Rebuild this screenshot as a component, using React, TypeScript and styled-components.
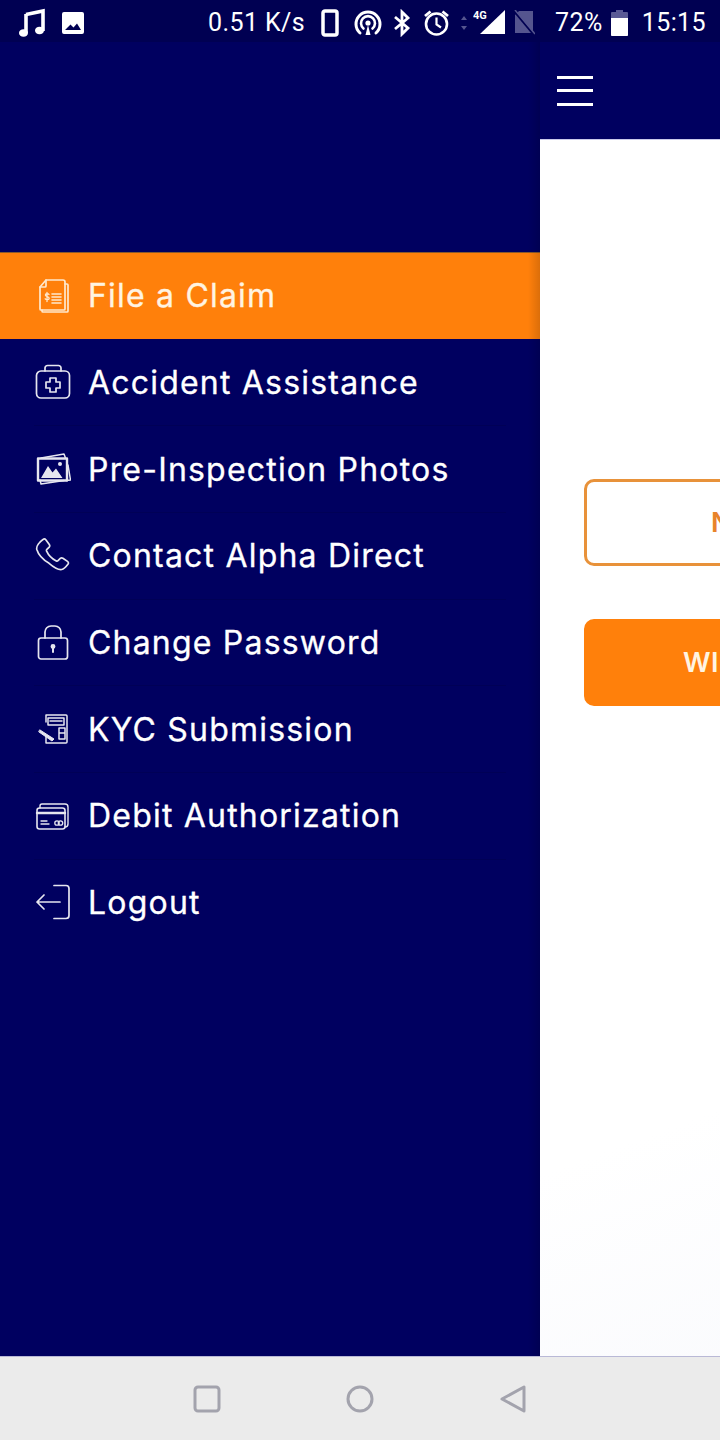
import styled, { createGlobalStyle } from 'styled-components';
import { ReactNode } from 'react';

const GlobalStyle = createGlobalStyle`
	html, body {
		margin: 0;
		padding: 0;
		background: #fff;
	}
	* {
		box-sizing: border-box;
	}
`;

const Screen = styled.div`
	width: 720px;
	height: 1440px;
	display: flex;
	flex-direction: column;
	overflow: hidden;
	font-family: 'Inter', 'Liberation Sans', sans-serif;
`;

const StatusBar = styled.div`
	height: 42px;
	flex-shrink: 0;
	display: flex;
	align-items: center;
	padding-top: 3px;
	background: #000052;
	color: #fff;
`;

const StatusLeft = styled.div`
	display: flex;
	align-items: center;
	gap: 16px;
	padding-left: 17px;
`;

const StatusRight = styled.div`
	margin-left: auto;
	display: flex;
	align-items: center;
	padding-right: 14px;
`;

const StatusText = styled.span<{ $left?: number }>`
	font-family: 'Roboto', 'Liberation Sans', sans-serif;
	font-size: 25px;
	line-height: 38px;
	letter-spacing: 0.4px;
	white-space: nowrap;
	margin-left: ${(p) => p.$left ?? 0}px;
`;

const StatusIcon = styled.svg<{ $left?: number }>`
	display: block;
	flex-shrink: 0;
	margin-left: ${(p) => p.$left ?? 0}px;
`;

const Main = styled.div`
	flex: 1;
	min-height: 0;
	display: flex;
	overflow: hidden;
`;

const Drawer = styled.nav`
	position: relative;
	width: 540px;
	flex-shrink: 0;
	background: #000060;
	padding-top: 210px;

	&::after {
		content: '';
		position: absolute;
		top: 0;
		bottom: 0;
		right: 0;
		width: 12px;
		background: linear-gradient(to right, rgba(0, 0, 0, 0), rgba(0, 0, 0, 0.14));
	}
`;

const MenuRow = styled.div<{ $active?: boolean }>`
	height: 86.67px;
	display: flex;
	align-items: center;
	gap: 17px;
	padding-left: 35px;
	background: ${(p) => (p.$active ? '#ff800b' : 'transparent')};
	color: ${(p) => (p.$active ? '#fff4e2' : '#fff')};
	border-top: 1px solid ${(p) => (p.$active ? '#8a5a2c' : 'transparent')};
	position: relative;

	& + &::before {
		content: '';
		position: absolute;
		top: -1px;
		left: 34px;
		right: 34px;
		height: 1px;
		background: #000056;
	}
`;

const MenuLabel = styled.span`
	font-size: 32px;
	font-weight: 400;
	letter-spacing: 1.2px;
	white-space: nowrap;
	-webkit-text-stroke: 0.3px currentColor;
`;

const MenuIcon = styled.svg`
	width: 36px;
	height: 36px;
	flex-shrink: 0;
	display: block;
	fill: none;
	stroke: currentColor;
	stroke-width: 1.7;
	stroke-linejoin: round;
	stroke-linecap: round;
	opacity: 0.9;
`;

const Content = styled.div`
	width: 720px;
	flex-shrink: 0;
	display: flex;
	flex-direction: column;
	background: #fff;
`;

const Header = styled.div`
	height: 98px;
	flex-shrink: 0;
	display: flex;
	align-items: center;
	padding-left: 17px;
	background: #000060;
	border-bottom: 1px solid #c9c9ea;
`;

const Hamburger = styled.div`
	width: 36px;
	display: flex;
	flex-direction: column;
	gap: 10.5px;

	span {
		display: block;
		height: 3px;
		background: #fff;
	}
`;

const Body = styled.div`
	flex: 1;
	display: flex;
	flex-direction: column;
	gap: 53px;
	padding: 339px 44px 0;
	background: linear-gradient(160deg, #ffffff 70%, #f7f8fc 100%);
`;

const ActionButton = styled.div<{ $filled?: boolean; $textLeft: number }>`
	height: 87px;
	display: flex;
	align-items: center;
	border-radius: 10px;
	padding-left: ${(p) => p.$textLeft}px;
	font-size: 27px;
	font-weight: 600;
	letter-spacing: 0.5px;
	background: ${(p) => (p.$filled ? '#ff800b' : '#fff')};
	border: 3px solid ${(p) => (p.$filled ? '#ff800b' : '#e8923a')};
	color: ${(p) => (p.$filled ? '#fff4e2' : '#e8842a')};
`;

const NavBar = styled.div`
	height: 84px;
	flex-shrink: 0;
	display: flex;
	justify-content: center;
	align-items: center;
	gap: 125px;
	background: #ebebeb;
	border-top: 1px solid #b9b9d6;
`;

const NavIcon = styled.svg`
	width: 28px;
	height: 28px;
	display: block;
	fill: none;
	stroke: #a3a3ad;
	stroke-width: 3;
	stroke-linejoin: round;
`;

type MenuItem = { label: string; active?: boolean; icon: ReactNode };

const items: MenuItem[] = [
	{
		label: 'File a Claim',
		active: true,
		icon: (
			<>
				<path d="M11 2h17a2 2 0 0 1 2 2v27a1 1 0 0 1-1 1H6a1 1 0 0 1-1-1V9z" />
				<path d="M11 2v6a1 1 0 0 1-1 1H5" />
				<path d="M30 6h2a1 1 0 0 1 1 1v26a1 1 0 0 1-1 1H8a1 1 0 0 1-1-1v-1" />
				<path d="M14 16.5c-.6-1-3.6-1.2-3.6.6 0 1.9 3.8 1.100 3.800 3.200 0 1.800-3.200 1.600-4 .5M12 14.500v9" strokeWidth="1.3" />
				<path d="M17 16h9M17 19h9M17 22h9M17 25h9" strokeWidth="1.600" />
			</>
		),
	},
	{
		label: 'Accident Assistance',
		icon: (
			<>
				<rect x="1.500" y="7" width="33" height="27" rx="4.500" />
				<path d="M10 7V4a2.500 2.500 0 0 1 2.500-2.500h11A2.500 2.500 0 0 1 26 4v3" />
				<path d="M15 14h6v4h4v6h-4v4h-6v-4h-4v-6h4z" />
			</>
		),
	},
	{
		label: 'Pre-Inspection Photos',
		icon: (
			<>
				<path d="M6 7l23-4 1.500 4M33 14l2.500 15-4 .6M5 29l1 4 23-3.500" strokeWidth="1.500" />
				<rect x="3" y="7.500" width="29" height="22" strokeWidth="2.400" />
				<path d="M6 27l7-12 4.500 6.500 3.500-4 6.500 9.500z" fill="currentColor" stroke="none" />
				<circle cx="25" cy="13" r="2" fill="currentColor" stroke="none" />
			</>
		),
	},
	{
		label: 'Contact Alpha Direct',
		icon: (
			<path d="M8 1.500c1-.8 2-.8 2.800.2l3.500 4.800c.6.900.6 1.800-.1 2.600l-2.300 2.300c-.5.500-.6 1-.3 1.700 1.800 3.900 5.800 7.900 9.700 9.800.7.300 1.200.2 1.700-.3l2.300-2.300c.8-.7 1.700-.7 2.600-.1l4.600 3.200c1.100.8 1.200 1.900.4 2.900-1.800 2.400-3.800 4.700-6.200 5.200-2.900.5-7.700-2-12.600-6.200C7.300 21.300 3 15.400 1.800 11.500 1 8.300 4.500 4 8 1.500z" />
		),
	},
	{
		label: 'Change Password',
		icon: (
			<>
				<rect x="3.500" y="14" width="29" height="21" rx="2.500" />
				<path d="M10 14V8a6 6 0 0 1 6-6h4a6 6 0 0 1 6 6v6" />
				<circle cx="18" cy="22.500" r="1.600" fill="currentColor" />
				<path d="M18 23v5" strokeWidth="2" />
			</>
		),
	},
	{
		label: 'KYC Submission',
		icon: (
			<>
				<path d="M11 11V4h20a1 1 0 0 1 1 1v26a1 1 0 0 1-1 1H11v-6" strokeWidth="1.500" />
				<path d="M13 7h16v7H13zM15 10h12" strokeWidth="1.500" />
				<path d="M24 17h6v11h-6zM25 22h4" strokeWidth="1.500" />
				<path d="M5 19l14 9-2 2L4 21z" fill="currentColor" strokeWidth="1" />
			</>
		),
	},
	{
		label: 'Debit Authorization',
		icon: (
			<>
				<rect x="2" y="10" width="28" height="21" rx="2.500" strokeWidth="1.600" />
				<path d="M5 10V8a2 2 0 0 1 2-2h23a3 3 0 0 1 3 3v17a3 3 0 0 1-3 3" strokeWidth="1.400" />
				<path d="M2 15h28" strokeWidth="2.400" />
				<path d="M6 23h6M6 26h8" strokeWidth="1.300" />
				<circle cx="22" cy="25" r="2.200" strokeWidth="1.300" />
				<circle cx="25.500" cy="25" r="2.200" strokeWidth="1.300" />
			</>
		),
	},
	{
		label: 'Logout',
		icon: (
			<>
				<path d="M19 1.500h12a3 3 0 0 1 3 3v27a3 3 0 0 1-3 3H19" />
				<path d="M25 18H2M9 11l-7 7 7 7" />
			</>
		),
	},
];

function App() {
	return (
		<Screen>
			<GlobalStyle />
			<StatusBar>
				<StatusLeft>
					<StatusIcon width="28" height="30" viewBox="0 0 28 30">
						<path d="M9 6.500 26 3v20" fill="none" stroke="#fff" strokeWidth="3.600" />
						<path d="M9 6v19" fill="none" stroke="#fff" strokeWidth="3.600" />
						<ellipse cx="6.500" cy="25" rx="4.500" ry="3.800" fill="#fff" />
						<ellipse cx="22.500" cy="22.500" rx="4.500" ry="3.800" fill="#fff" />
					</StatusIcon>
					<StatusIcon width="24" height="24" viewBox="0 0 24 24">
						<path
							fillRule="evenodd"
							fill="#fff"
							d="M3 1h18a2 2 0 0 1 2 2v18a2 2 0 0 1-2 2H3a2 2 0 0 1-2-2V3a2 2 0 0 1 2-2zM4 19h16l-4-6.500-3.500 4-3-3z"
						/>
					</StatusIcon>
				</StatusLeft>
				<StatusRight>
					<StatusText>0.51 K/s</StatusText>
					<StatusIcon $left={16} width="18" height="28" viewBox="0 0 18 28">
						<rect x="2" y="2" width="14" height="24" rx="2" fill="none" stroke="#fff" strokeWidth="3.500" />
					</StatusIcon>
					<StatusIcon $left={15} width="28" height="28" viewBox="0 0 28 28">
						<g fill="none" stroke="#fff" strokeLinecap="round">
							<path d="M6 24a12 12 0 1 1 16 0" strokeWidth="3" />
							<path d="M9.500 19.500a7 7 0 1 1 9 0" strokeWidth="2.600" />
						</g>
						<circle cx="14" cy="14" r="2.600" fill="#fff" />
						<path d="M11.500 26l2.500-10 2.500 10z" fill="#fff" />
					</StatusIcon>
					<StatusIcon $left={11} width="18" height="28" viewBox="0 0 18 28">
						<path d="M2 8l13 11-6 6V3l6 6L2 20" fill="none" stroke="#fff" strokeWidth="2.800" />
					</StatusIcon>
					<StatusIcon $left={12} width="27" height="28" viewBox="0 0 27 28">
						<g fill="none" stroke="#fff" strokeWidth="2.600">
							<circle cx="13.500" cy="15" r="10.500" />
							<path d="M13.500 8.500V15.500l4.500 3" strokeWidth="2.200" />
							<path d="M2 7l5.500-4.500M25 7l-5.500-4.500" strokeWidth="2.800" />
						</g>
					</StatusIcon>
					<StatusIcon $left={10} width="8" height="14" viewBox="0 0 8 14">
						<path d="M4 0 7 4H1zM4 14 1 10h6z" fill="#55558f" />
					</StatusIcon>
					<StatusIcon $left={5} width="33" height="28" viewBox="0 0 33 28">
						<text x="0" y="10" fontSize="11" fontWeight="700" fontFamily="Roboto, sans-serif" fill="#fff">
							4G
						</text>
						<path d="M7 25 32 1v24z" fill="#fff" />
					</StatusIcon>
					<StatusIcon $left={7} width="22" height="26" viewBox="0 0 22 26">
						<path d="M6 1h14v22H2V5z" fill="#55558f" />
						<path d="M1 1l20 24" stroke="#000052" strokeWidth="2" />
						<path d="M2 0l20 24" stroke="#55558f" strokeWidth="1.500" />
					</StatusIcon>
					<StatusText $left={20}>72%</StatusText>
					<StatusIcon $left={8} width="17" height="26" viewBox="0 0 17 26">
						<path d="M5 0h7v2h4a1 1 0 0 1 1 1v22a1 1 0 0 1-1 1H1a1 1 0 0 1-1-1V3a1 1 0 0 1 1-1h4z" fill="#5a5a95" />
						<path d="M0 8h17v17a1 1 0 0 1-1 1H1a1 1 0 0 1-1-1z" fill="#fff" />
					</StatusIcon>
					<StatusText $left={14}>15:15</StatusText>
				</StatusRight>
			</StatusBar>
			<Main>
				<Drawer>
					{items.map((item) => (
						<MenuRow key={item.label} $active={item.active}>
							<MenuIcon viewBox="0 0 36 36">{item.icon}</MenuIcon>
							<MenuLabel>{item.label}</MenuLabel>
						</MenuRow>
					))}
				</Drawer>
				<Content>
					<Header>
						<Hamburger>
							<span />
							<span />
							<span />
						</Hamburger>
					</Header>
					<Body>
						<ActionButton $textLeft={124}>N</ActionButton>
						<ActionButton $filled $textLeft={96}>
							WI
						</ActionButton>
					</Body>
				</Content>
			</Main>
			<NavBar>
				<NavIcon viewBox="0 0 28 28">
					<rect x="2" y="2" width="24" height="24" rx="3" />
				</NavIcon>
				<NavIcon viewBox="0 0 28 28">
					<circle cx="14" cy="14" r="12" />
				</NavIcon>
				<NavIcon viewBox="0 0 28 28">
					<path d="M3 14 25 2v24z" />
				</NavIcon>
			</NavBar>
		</Screen>
	);
}

export default App;
